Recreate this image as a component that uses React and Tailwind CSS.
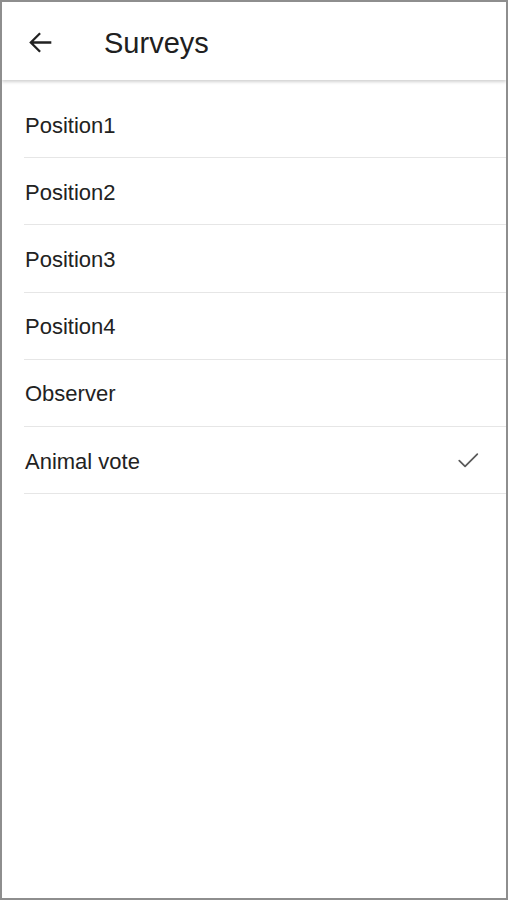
import React from "react";

const items = ["Position1", "Position2", "Position3", "Position4", "Observer", "Animal vote"];

export default function App() {
  return (
    <div
      className="w-[508px] h-[900px] border-2 border-[#8e8e8e] bg-white flex flex-col overflow-hidden"
      style={{ fontFamily: '"Liberation Sans", Arial, sans-serif' }}
    >
      <div className="h-[78px] shrink-0 flex items-center bg-white shadow-[0_2px_3px_rgba(0,0,0,0.18)] relative z-10">
        <div className="w-[76px] pl-[24px] pt-[2px] flex items-center">
          <svg width="29" height="29" viewBox="0 0 24 24" fill="none">
            <path d="M20 12H4.5M11 5l-7 7 7 7" stroke="#222" strokeWidth="1.9" strokeLinecap="square" strokeLinejoin="miter" />
          </svg>
        </div>
        <span className="text-[29px] text-[#202020] ml-[26px] leading-none pt-[4px]">Surveys</span>
      </div>
      <div className="pt-[11px] pl-[22px] flex flex-col">
        {items.map((t, i) => (
          <div
            key={t}
            className="h-[67.2px] flex items-center justify-between border-b-[1.5px] border-[#e6e6e6] pr-[24px]"
          >
            <span className="text-[22px] text-[#222] pl-[1px] pt-[2px]">{t}</span>
            {i === items.length - 1 && (
              <svg width="28" height="28" viewBox="0 0 24 24" fill="none">
                <path d="M4.5 12.5l5 5L20 7" stroke="#5a5a5a" strokeWidth="1.5" strokeLinecap="round" strokeLinejoin="round" />
              </svg>
            )}
          </div>
        ))}
      </div>
    </div>
  );
}
